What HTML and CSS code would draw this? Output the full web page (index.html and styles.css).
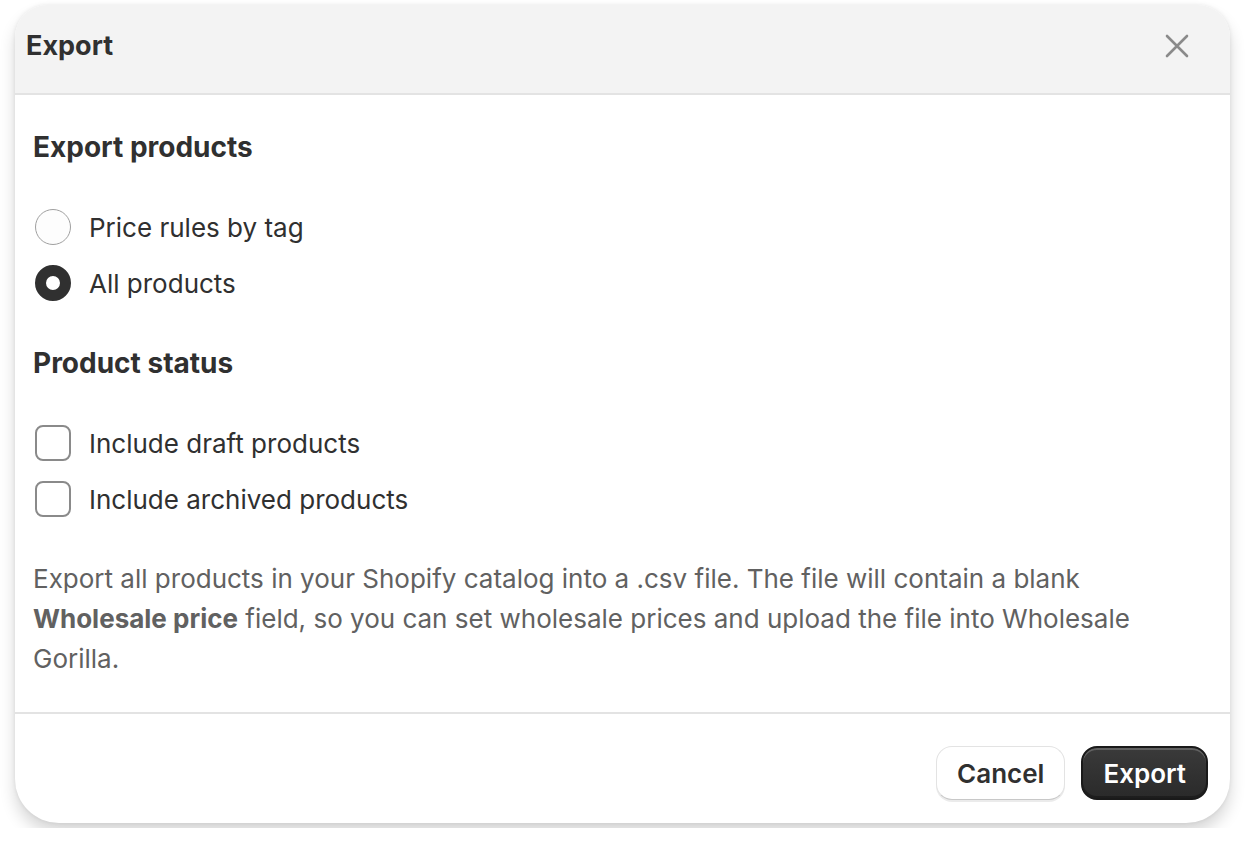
FILE: index.html
```html
<!DOCTYPE html>
<html>
<head>
	<title>Export</title>
	<link rel="stylesheet" href="styles.css">
</head>
<body>

<div class="modal">
	<div class="modalHeader">
		<h2 class="modalTitle">Export</h2>
		<button class="closeBtn" type="button" aria-label="Close">
			<svg viewBox="0 0 24 24" width="24" height="24">
				<path d="M2 2 L22 22 M22 2 L2 22" stroke="#8a8a8a" stroke-width="2.6" stroke-linecap="round" fill="none"/>
			</svg>
		</button>
	</div>

	<div class="modalBody">
		<h3 class="sectionTitle">Export products</h3>
		<div class="choiceList">
			<label class="choice">
				<span class="radio"></span>
				Price rules by tag
			</label>
			<label class="choice">
				<span class="radio checked"></span>
				All products
			</label>
		</div>

		<h3 class="sectionTitle">Product status</h3>
		<div class="choiceList">
			<label class="choice">
				<span class="checkbox"></span>
				Include draft products
			</label>
			<label class="choice">
				<span class="checkbox"></span>
				Include archived products
			</label>
		</div>

		<p class="helpText">Export all products in your Shopify catalog into a .csv file. The file will contain a blank <b>Wholesale price</b> field, so you can set wholesale prices and upload the file into Wholesale Gorilla.</p>
	</div>

	<div class="modalFooter">
		<button class="btn" type="button">Cancel</button>
		<button class="btn primary" type="button">Export</button>
	</div>
</div>

</body>
</html>
```

FILE: styles.css
```css
body {
	margin: 0;
	padding: 5px 15px;
	background: #fff;
	font-family: Inter, "Noto Sans", sans-serif;
	color: #303030;
}
.modal {
	width: 1215px;
	background: #fff;
	border-radius: 32px 32px 44px 44px;
	box-shadow: 0 10px 16px rgba(0,0,0,.16), 0 0 4px rgba(0,0,0,.08);
	overflow: hidden;
}
.modalHeader {
	display: flex;
	align-items: center;
	justify-content: space-between;
	height: 81px;
	padding: 0 41px 7px 11px;
	background: #f3f3f3;
	border-bottom: 2px solid #e3e3e3;
}
.modalTitle {
	margin: 0;
	font-size: 27px;
	font-weight: 650;
	line-height: 40px;
}
.closeBtn {
	display: flex;
	padding: 0;
	border: none;
	background: none;
}
.modalBody {
	display: flex;
	flex-direction: column;
	gap: 40px;
	padding: 32px 18px 33px;
	border-bottom: 2px solid #e3e3e3;
}
.sectionTitle {
	margin: 0;
	font-size: 28px;
	font-weight: 650;
	line-height: 40px;
}
.choiceList {
	display: flex;
	flex-direction: column;
	gap: 16px;
}
.choice {
	display: flex;
	align-items: center;
	gap: 18px;
	height: 40px;
	font-size: 26px;
	font-weight: 400;
}
.radio {
	box-sizing: border-box;
	width: 36px;
	height: 36px;
	margin-left: 2px;
	border-radius: 50%;
	border: 1.5px solid #a0a0a0;
	background: #fdfdfd;
}
.radio.checked {
	border: 11px solid #303030;
	background: #fff;
}
.checkbox {
	box-sizing: border-box;
	width: 36px;
	height: 36px;
	margin-left: 2px;
	border-radius: 8px;
	border: 2px solid #8a8a8a;
	background: #fff;
}
.helpText {
	margin: 0;
	font-size: 26px;
	line-height: 40px;
	color: #616161;
}
.helpText b {
	font-weight: 650;
}
.modalFooter {
	display: flex;
	justify-content: flex-end;
	gap: 16px;
	padding: 32px 22px 23px;
}
.btn {
	height: 54px;
	padding: 0 20px;
	border-radius: 16px;
	border: 1px solid #e3e3e3;
	border-bottom-color: #c8c8c8;
	background: #fff;
	font-family: Inter, sans-serif;
	font-size: 26px;
	font-weight: 600;
	color: #303030;
	box-shadow: 0 2px 0 rgba(0,0,0,.08);
}
.btn.primary {
	border: 2px solid #1a1a1a;
	background: linear-gradient(#3a3a3a, #2a2a2a);
	color: #fff;
	box-shadow: inset 0 2px 0 rgba(255,255,255,.2), inset 0 -2px 0 rgba(0,0,0,.3);
}
```
